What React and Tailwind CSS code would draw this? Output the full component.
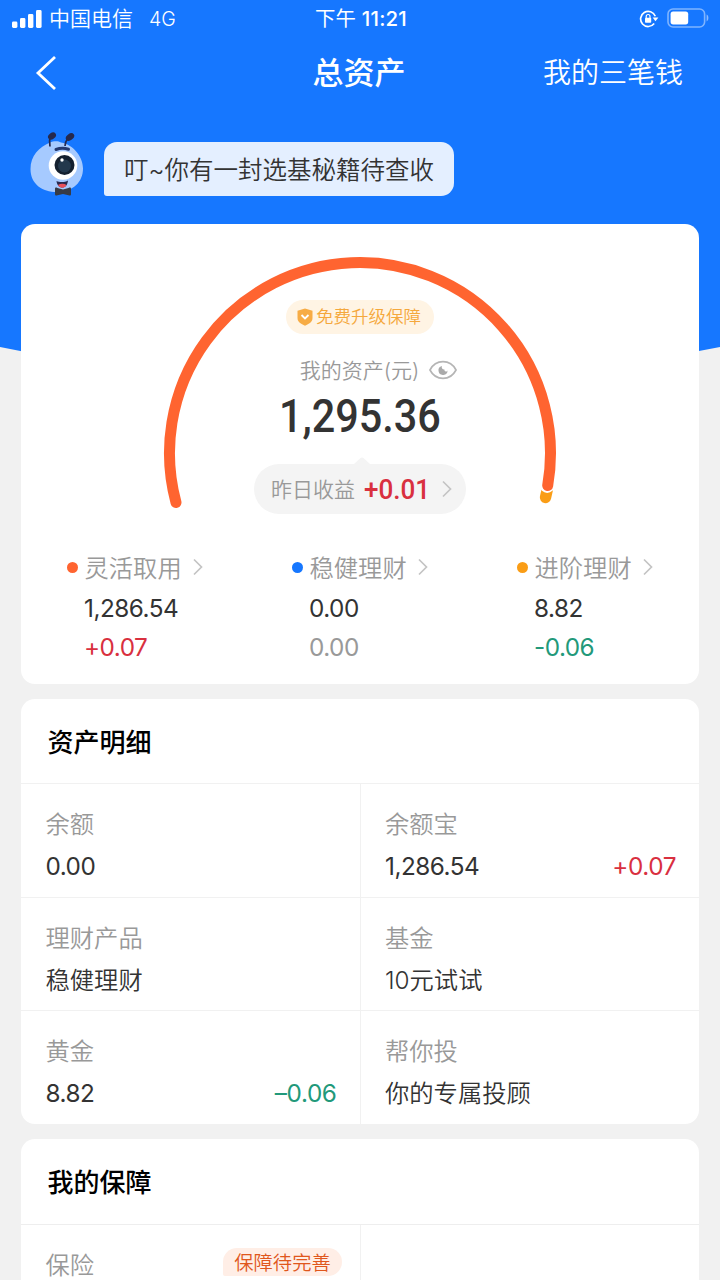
const summary = [
  { name: '灵活取用', dot: 'bg-[#ff6430]', amount: '1,286.54', change: '+0.07', color: 'text-[#d9303f]' },
  { name: '稳健理财', dot: 'bg-[#1677ff]', amount: '0.00', change: '0.00', color: 'text-[#999999]' },
  { name: '进阶理财', dot: 'bg-[#fa9d16]', amount: '8.82', change: '-0.06', color: 'text-[#22997a]' },
];

const details = [
  { name: '余额', value: '0.00', numeric: true },
  { name: '余额宝', value: '1,286.54', numeric: true, change: '+0.07', color: 'text-[#d9303f]' },
  { name: '理财产品', value: '稳健理财' },
  { name: '基金', value: '10元试试' },
  { name: '黄金', value: '8.82', numeric: true, change: '–0.06', color: 'text-[#22997a]' },
  { name: '帮你投', value: '你的专属投顾' },
];

function Chevron({ className }) {
  return (
    <svg className={className} width="10" height="18" viewBox="0 0 10 18" fill="none">
      <path d="M1 1.5 8.5 9 1 16.5" stroke="#c4c4c4" strokeWidth="1.7" />
    </svg>
  );
}

function StatusBar() {
  return (
    <div className="grid h-9 grid-cols-3 items-center pl-3 pr-[10px] text-[21px] leading-9">
      <div className="flex items-center">
        <svg width="30" height="20" viewBox="0 0 30 20" fill="#fff">
          <rect x="0" y="12.5" width="5.4" height="6.5" rx="1.4" />
          <rect x="8" y="9" width="5.4" height="10" rx="1.4" />
          <rect x="16" y="5" width="5.4" height="14" rx="1.4" />
          <rect x="24" y="1" width="5.6" height="18" rx="1.4" />
        </svg>
        <span className="ml-[7px] pt-px">中国电信</span>
        <span className="ml-4 text-[19.5px]">4G</span>
      </div>
      <div className="pt-px text-center text-[20.4px] font-medium tracking-[0.2px]">
        <span className="font-normal">下午</span> 11:21
      </div>
      <div className="flex items-center justify-end">
        <svg width="20" height="18" viewBox="0 0 20 18" fill="none">
          <path d="M16.3 6.2A7.6 7.6 0 1 0 15.2 13.6" stroke="#fff" strokeWidth="1.7" />
          <path d="M13.6 7.6h5.8l-2.9 3.6z" fill="#fff" />
          <rect x="6" y="7.8" width="6.2" height="5" rx="0.8" fill="#fff" />
          <path d="M7.2 8V6.4a1.9 1.9 0 0 1 3.8 0V8" stroke="#fff" strokeWidth="1.2" />
        </svg>
        <svg className="-mt-[2px] ml-2" width="43" height="20" viewBox="0 0 43 20" fill="none">
          <rect x="1" y="1" width="36.6" height="18" rx="5" stroke="#fff" strokeOpacity="0.45" strokeWidth="1.6" />
          <rect x="3.6" y="3.6" width="17.6" height="12.8" rx="2.6" fill="#fff" />
          <path d="M39.6 6.6c2.4.9 2.4 5.9 0 6.8z" fill="#fff" fillOpacity="0.5" />
        </svg>
      </div>
    </div>
  );
}

function Mascot() {
  return (
    <svg width="54" height="66" viewBox="0 0 54 66" fill="none">
      <path d="M0.5 37C0.5 24 9 15 20 10.5c3-1.3 8-2 11 0C44 13 53 25 53 36.5 53 50 43 60 27 60 12 60 .5 52 .5 37Z" fill="#a6caff" />
      <path d="M20 14.500c-.5-4-.8-6 0-9M35 14c.2-4 1.500-6 3-8" stroke="#26294d" strokeWidth="1.7" />
      <ellipse cx="22" cy="4" rx="4.300" ry="3.200" transform="rotate(-35 22 4)" fill="#26294d" />
      <ellipse cx="40" cy="5" rx="4.600" ry="3.200" transform="rotate(-35 40 5)" fill="#26294d" />
      <path d="M26 17.500c4-1.500 8.500-1.500 12.500-.3" stroke="#25396f" strokeWidth="3" strokeLinecap="round" />
      <circle cx="33" cy="33.500" r="14.300" fill="#fff" />
      <circle cx="34.500" cy="33" r="10" fill="#14202f" />
      <circle cx="34.500" cy="34" r="6.500" fill="#23384c" />
      <circle cx="32" cy="28" r="1.700" fill="#fff" />
      <path d="M26.500 49c3 1.500 8.500 1.500 11.500-.5-.5 4.500-2.500 7-5.700 7s-5.300-2.500-5.800-6.500Z" fill="#29294f" />
      <path d="M28 53c2.500-1.800 6-1.800 8.500 0-1 1.900-2.300 2.700-4.200 2.700S29 54.900 28 53Z" fill="#e8505b" />
      <path d="M25 57c0-1.500 1-1.800 2.500-1l5.500 1.600 5.500-1.600c1.500-.8 2.500-.5 2.500 1v5c0 1.500-1 1.800-2.500 1.200L33 62l-5.500 1.200c-1.500.6-2.500.3-2.500-1.200Z" fill="#373b45" />
    </svg>
  );
}

function Header() {
  return (
    <header>
      <div className="h-[347px] bg-[#1677ff] text-white">
        <StatusBar />
        <div className="grid h-[74px] grid-cols-3 items-center pl-[35px] pr-[37px]">
          <svg width="22" height="36" viewBox="0 0 22 36" fill="none">
            <path d="M20 2 3 18l17 16" stroke="#fff" strokeWidth="2.8" />
          </svg>
          <h1 className="text-center text-[31px] font-medium leading-[74px]">总资产</h1>
          <div className="whitespace-nowrap text-right text-[28px] leading-[74px]">我的三笔钱</div>
        </div>
        <div className="mt-[22px] flex pl-[30px]">
          <Mascot />
          <div className="ml-5 mt-[10px] h-[54px] w-[350px] whitespace-nowrap rounded-[13px] rounded-bl-[3px] bg-[#e4efff] pl-5 text-[24.5px] leading-[56px] text-[#333333]">
            叮~你有一封选基秘籍待查收
          </div>
        </div>
      </div>
      <svg className="block" width="720" height="40" viewBox="0 0 720 40">
        <path d="M0 0Q360 74 720 0Z" fill="#1677ff" />
      </svg>
    </header>
  );
}

function Gauge() {
  return (
    <div className="relative h-[310px]">
      <svg className="absolute left-0 top-0" width="678" height="310" viewBox="21 224 678 310" fill="none">
        <path d="M547.200 490 545.500 497.500" stroke="#fa9d16" strokeWidth="11.400" strokeLinecap="round" />
        <circle cx="547.200" cy="485.700" r="7.300" fill="#fff" />
        <path d="M176 502.500A190.500 190.500 0 1 1 547.700 485.500" stroke="#ff6430" strokeWidth="11" strokeLinecap="round" />
      </svg>
      <div className="relative flex flex-col items-center pt-[76px]">
        <div className="flex h-[34px] w-[148px] items-center rounded-full bg-[#fff4e4] pl-[11px] text-[17.5px] leading-[34px] text-[#f5a83c]">
          <svg className="mr-[3px]" width="16" height="18" viewBox="0 0 16 18" fill="none">
            <path d="M8 0.500 15.500 2.800V10c0 4-3.500 6-7.500 7.700C4 16 .5 14 .5 10V2.800Z" fill="#f7ac45" />
            <path d="m4.500 7 3.500 3.400L11.500 7" stroke="#fff" strokeWidth="1.900" />
          </svg>
          <span className="whitespace-nowrap">免费升级保障</span>
        </div>
        <div className="ml-[37px] mt-5 flex h-8 items-center text-[21px] leading-8 text-[#999999]">
          <span className="pt-px">我的资产(元)</span>
          <svg className="ml-[10px]" width="28" height="20" viewBox="0 0 29 20" fill="none">
            <path d="M1 10C7-1.500 22-1.500 28 10 22 21.500 7 21.500 1 10Z" stroke="#b5b5b5" strokeWidth="1.700" />
            <path d="M13.500 5.800A4.700 4.700 0 1 0 19.200 10.200 1.500 1.500 0 0 1 16 9.500 2.500 2.500 0 0 1 13.500 5.800Z" fill="#aaaaaa" />
          </svg>
        </div>
        <div className="mt-[2px] h-14 origin-center scale-x-[.89] font-[Roboto] text-[46.500px] font-medium leading-[56px] text-[#333333]">
          1,295.36
        </div>
        <svg className="ml-1 mt-[13px]" width="16" height="7" viewBox="0 0 16 7">
          <path d="M0 7 6.500 1Q8 0 9.500 1L16 7Z" fill="#f4f4f4" />
        </svg>
        <div className="flex h-[50px] w-[212px] items-center whitespace-nowrap rounded-full bg-[#f4f4f4] pl-[17px] text-[21px] leading-[50px] text-[#999999]">
          <span className="pt-px">昨日收益</span>
          <span className="ml-[9px] w-[66px] origin-left scale-x-[.93] pt-px font-[Roboto] text-[28px] font-medium text-[#d9303f]">+0.01</span>
          <Chevron className="ml-[12px]" />
        </div>
      </div>
    </div>
  );
}

function SummaryItem({ item }) {
  return (
    <div className="w-[225px] shrink-0">
      <div className="flex h-[38px] items-center leading-[38px] text-[#999999]">
        <i className={`mr-[7px] size-[11px] rounded-full ${item.dot}`} />
        <span className="pt-px">{item.name}</span>
        <Chevron className="ml-[11px]" />
      </div>
      <div className="ml-[17.5px] mt-[2px] h-[39px] font-normal leading-10 tracking-[-0.5px] text-[#333333]">{item.amount}</div>
      <div className={`ml-[17.5px] h-[39px] font-normal leading-10 tracking-[-0.5px] ${item.color}`}>{item.change}</div>
    </div>
  );
}

function DetailCell({ item }) {
  return (
    <div className="h-[113.7px] border-t border-[#f1f1f1] pl-[24.5px] pr-[23px] pt-5 odd:border-r">
      <div className="h-10 leading-10 text-[#999999]">{item.name}</div>
      <div className="mt-[2px] flex h-10 justify-between leading-10 text-[#333333]">
        <span className={item.numeric ? 'font-normal tracking-[-0.5px]' : ''}>{item.value}</span>
        {item.change && <span className={`font-normal tracking-[-0.4px] ${item.color}`}>{item.change}</span>}
      </div>
    </div>
  );
}

export default function App() {
  return (
    <div className="h-[1280px] w-[720px] overflow-hidden bg-[#f1f1f1] font-[Inter,'Noto_Sans_CJK_SC',sans-serif] text-[24.3px] font-[350]">
      <Header />
      <main className="relative -mt-[163px] px-[21px]">
        <section className="h-[460px] rounded-[14px] bg-white">
          <Gauge />
          <div className="mt-[14px] flex pl-[45.5px]">
            {summary.map((item) => (
              <SummaryItem key={item.name} item={item} />
            ))}
          </div>
        </section>

        <section className="mt-[15px] h-[425px] overflow-hidden rounded-[14px] bg-white">
          <h2 className="h-[84px] pl-[26.5px] text-[26px] font-medium leading-[87px] text-black">资产明细</h2>
          <div className="grid grid-cols-[339.500px_1fr]">
            {details.map((item) => (
              <DetailCell key={item.name} item={item} />
            ))}
          </div>
        </section>

        <section className="mt-[15px] h-[220px] rounded-[14px] bg-white">
          <h2 className="h-[85px] pl-[26.5px] text-[26px] font-medium leading-[88px] text-black">我的保障</h2>
          <div className="grid h-[135px] grid-cols-[339.500px_1fr] border-t border-[#eeeeee]">
            <div className="flex items-start justify-between border-r border-[#f1f1f1] pl-[24.5px] pr-[17.5px] pt-[19px] leading-10 text-[#999999]">
              <span className="pt-px">保险</span>
              <span className="mt-1 h-7 w-[119px] whitespace-nowrap rounded-[14px] rounded-bl-[2px] bg-[#ffeee6] text-center text-[19.3px] leading-[30px] text-[#e0571c]">
                保障待完善
              </span>
            </div>
            <div />
          </div>
        </section>
      </main>
    </div>
  );
}
